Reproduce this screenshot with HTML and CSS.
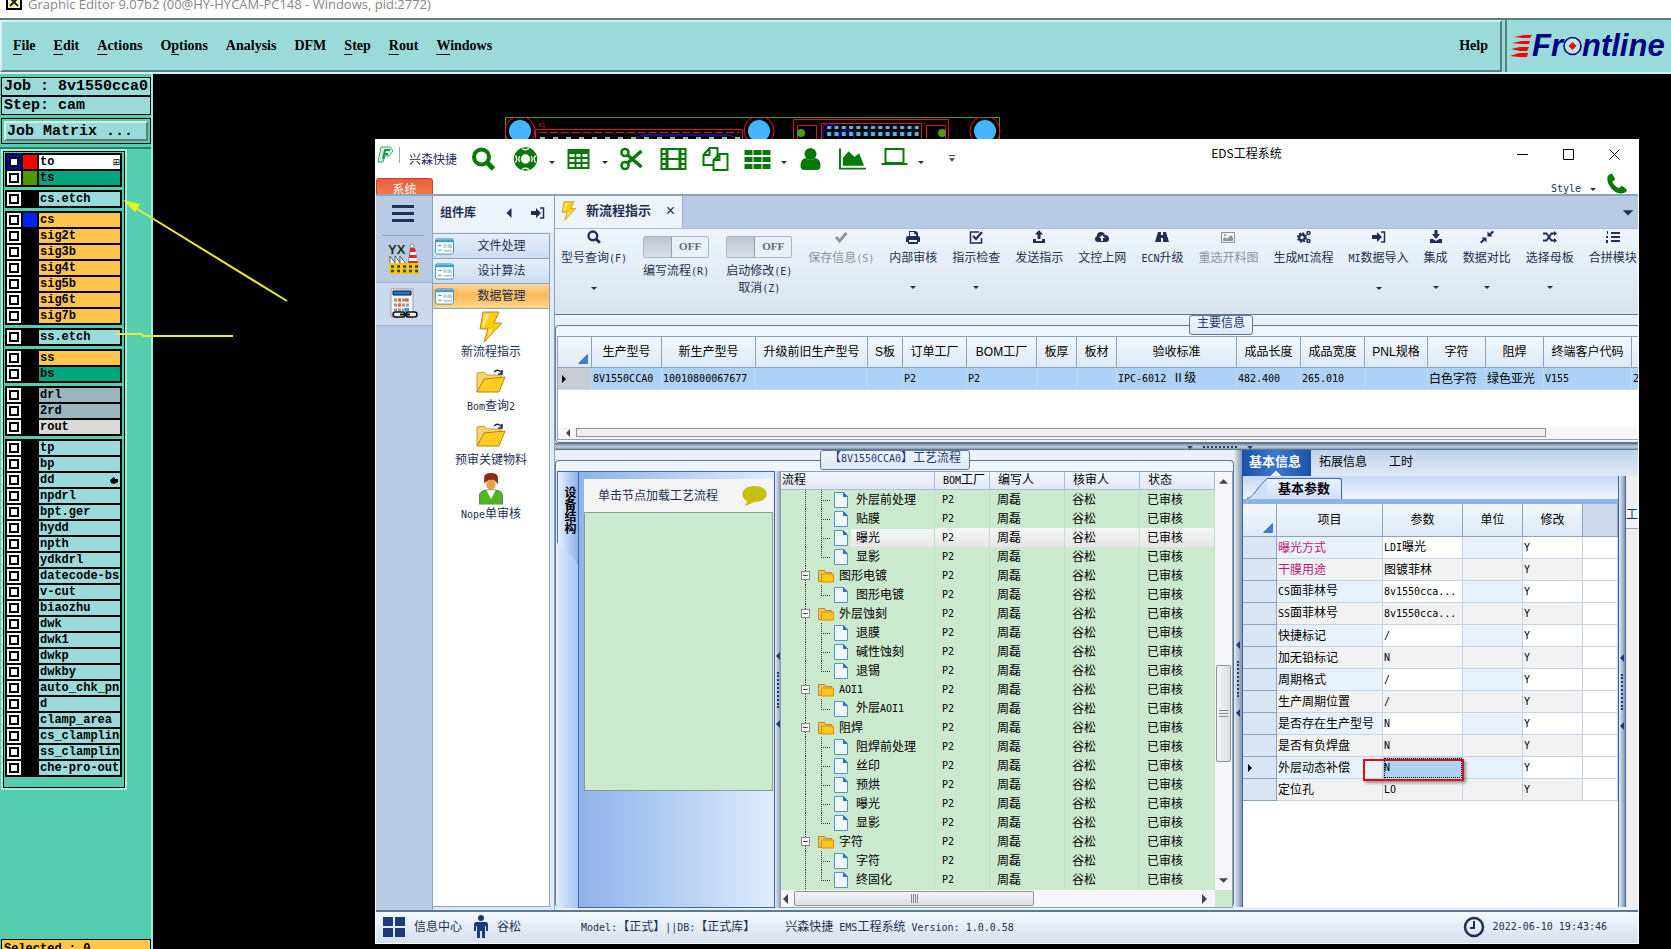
FILE: index.html
```html
<!DOCTYPE html>
<html lang="zh-CN">

<head>
  <meta charset="utf-8">
  <meta name="viewport" content="width=device-width">
  <title>EDS工程系统</title>
  <link rel="stylesheet" href="styles.css">
</head>
<body>
  <!-- icon sprite -->
  <svg class="sprite" width="0" height="0">
    <symbol id="search" viewBox="0 0 24 24"><circle cx="10" cy="10" r="7.5" fill="none" stroke="currentColor" stroke-width="4"/><path d="M15 15l7 7" stroke="currentColor" stroke-width="5"/></symbol>
    <symbol id="ring" viewBox="0 0 24 24"><circle cx="12" cy="12" r="8.2" fill="none" stroke="currentColor" stroke-width="7"/><g fill="none" stroke="#fff" stroke-width="1.3"><path d="M8.5 1.5q3.5 2.5 7 0M8.5 22.500q3.500-2.500 7 0M2 8.500q2.500 3.500 0 7M22 8.500q-2.500 3.500 0 7M6 9q-1.600 3 0 6M18 9q1.600 3 0 6"/></g></symbol>
    <symbol id="grid" viewBox="0 0 24 24"><path fill="currentColor" fill-rule="evenodd" d="M1 2h22v20H1zM3 7v3h5V7zm7 0v3h4V7zm6 0v3h5V7zM3 12v3h5v-3zm7 0v3h4v-3zm6 0v3h5v-3zM3 17v3h5v-3zm7 0v3h4v-3zm6 0v3h5v-3z"/></symbol>
    <symbol id="cut" viewBox="0 0 24 24"><g fill="none" stroke="currentColor" stroke-width="2.600"><circle cx="5.500" cy="5.500" r="3.500"/><circle cx="5.500" cy="18.500" r="3.500"/><path d="M8 8l14 12M8 16L22 4" stroke-width="3.600"/></g></symbol>
    <symbol id="film" viewBox="0 0 26 24"><path fill="currentColor" fill-rule="evenodd" d="M0 1h26v22H0zM2 3v3h3V3zm0 5v3h3V8zm0 5v3h3v-3zm0 5v3h3v-3zM8 3v8h10V3zm0 10v8h10v-8zM21 3v3h3V3zm0 5v3h3V8zm0 5v3h3v-3zm0 5v3h3v-3z"/></symbol>
    <symbol id="files" viewBox="0 0 26 24"><g fill="#fff" stroke="currentColor" stroke-width="2"><path d="M1 8l6-7h8v17H1zM1 8h6V1"/><path d="M11 13l6-6h8v16H11zM11 13h6V7"/></g></symbol>
    <symbol id="th" viewBox="0 0 26 24"><path fill="currentColor" d="M0 3h8v5H0zm9 0h8v5H9zm9 0h8v5h-8zM0 10h8v5H0zm9 0h8v5H9zm9 0h8v5h-8zM0 17h8v5H0zm9 0h8v5H9zm9 0h8v5h-8z"/></symbol>
    <symbol id="user" viewBox="0 0 24 24"><circle cx="12" cy="7" r="6" fill="currentColor"/><path fill="currentColor" d="M7 11q5 4 10 0 5 1 5 8 0 4-4 4H6q-4 0-4-4 0-7 5-8z"/></symbol>
    <symbol id="chart" viewBox="0 0 28 24"><path fill="currentColor" d="M0 1h2v20h26v2H0zM4 19v-8l6-7 6 6 5-4 5 13z"/></symbol>
    <symbol id="laptop" viewBox="0 0 26 24"><path fill="currentColor" fill-rule="evenodd" d="M3 1h20v15h3v2H0v-2h3zM5 3v12h16V3z"/></symbol>
    <symbol id="phone" viewBox="0 0 22 22"><path fill="currentColor" d="M1 4q2-4 5-3l3 5q0 2-3 3 2 5 7 7 2-3 4-2l4 3q1 3-3 4-6 2-12-4T1 4z"/></symbol>
    <symbol id="down" viewBox="0 0 8 8"><path fill="currentColor" d="M1 3h6L4 6z"/></symbol>
    <symbol id="more" viewBox="0 0 8 8"><path fill="#555" d="M1 0h6v1H1zM1 3h6L4 7z"/></symbol>
    <symbol id="check" viewBox="0 0 14 14"><path d="M2 7l3.500 4L12.500 3" fill="none" stroke="currentColor" stroke-width="3"/></symbol>
    <symbol id="print" viewBox="0 0 14 14"><path fill="currentColor" fill-rule="evenodd" d="M3 1h7l2 2v3q2 0 2 2v4h-2v2H2v-2H0V8q0-2 2-2h1zM4 2v4h6V4H8V2zM3 10v2h8v-2z"/></symbol>
    <symbol id="checkbox" viewBox="0 0 14 14"><path d="M12.500 8v5H1.500V2H10" fill="none" stroke="currentColor" stroke-width="1.500"/><path d="M4 6l3 3 6-7" fill="none" stroke="currentColor" stroke-width="2.200"/></symbol>
    <symbol id="upload" viewBox="0 0 14 14"><path fill="currentColor" d="M7 0l4 4.500H8.500V9h-3V4.500H3zM1 9h3v2h6V9h3v4H1z"/></symbol>
    <symbol id="cloud" viewBox="0 0 14 14"><path fill="currentColor" fill-rule="evenodd" d="M3 12q-3 0-3-3 0-2 2-3 0-4 4-4 3 0 4 3 4 0 4 4 0 3-3 3zM7 5L4 8h2v3h2V8h2z"/></symbol>
    <symbol id="road" viewBox="0 0 14 14"><path fill="currentColor" fill-rule="evenodd" d="M3 2h3v3h2V2h3l3 10H8V8H6v4H0z"/></symbol>
    <symbol id="image" viewBox="0 0 14 14"><path fill="none" stroke="currentColor" d="M.5 2.500h13v10H.5z"/><path fill="currentColor" d="M2 11V9l2-2 2 2 4-4 2 3v3z"/><circle cx="4" cy="5" r="1" fill="currentColor"/></symbol>
    <symbol id="cogs" viewBox="0 0 14 14"><g fill="none" stroke="currentColor"><circle cx="5" cy="7.500" r="2.800" stroke-width="2.200"/><circle cx="5" cy="7.500" r="4.500" stroke-width="1.500" stroke-dasharray="2 1.500"/><circle cx="11.500" cy="3" r="1.500" stroke-width="1.500"/><circle cx="11.500" cy="11" r="1.500" stroke-width="1.500"/></g></symbol>
    <symbol id="signin" viewBox="0 0 14 14"><path fill="currentColor" d="M0 5h5V2l5 5-5 5V9H0z"/><path d="M9 2h3.500v10H9" fill="none" stroke="currentColor" stroke-width="1.500"/></symbol>
    <symbol id="download" viewBox="0 0 14 14"><path fill="currentColor" d="M5.500 0h3v4H11L7 9 3 4h2.500zM1 9h3l3 2 3-2h3v4H1z"/></symbol>
    <symbol id="compress" viewBox="0 0 14 14"><path fill="currentColor" d="M7.500 1.500v5h5L11 5l3-3-1.500-1.500-3 3zM6.500 12.500v-5h-5L3 9l-3 3 1.500 1.500 3-3z"/></symbol>
    <symbol id="random" viewBox="0 0 14 14"><path d="M0 3.500h3.500l5 7H12M0 10.500h3.500l5-7H12" fill="none" stroke="currentColor" stroke-width="1.800"/><path fill="currentColor" d="M11 1l3 2.500L11 6zM11 8l3 2.500-3 2.500z"/></symbol>
    <symbol id="list" viewBox="0 0 14 14"><path fill="currentColor" d="M5 2h9v2H5zm0 4h9v2H5zm0 4h9v2H5zM1 1h1v3H1zm-1 5h2v2H0zm0 4h2v3H0z"/></symbol>
    <symbol id="bolt" viewBox="0 0 24 32"><path fill="#fc0" stroke="#b98a2a" d="M4 1h16l-5 11h8L5 31l4-13H1z"/><path fill="#ffe98a" d="M6 3h5L5 16H3zM10 18h4l-5 8z"/></symbol>
    <symbol id="open" viewBox="0 0 30 24"><path fill="#f6d56a" stroke="#c89a2c" d="M1 23V4l7-1 3 3h14v4"/><path fill="#fc2" stroke="#b8860b" d="M1 23L8 10l21-2-6 15z"/><path d="M18 3q4-4 8 1m0-3v4h-4" fill="none" stroke="#1c2b4f" stroke-width="1.500"/></symbol>
    <symbol id="person" viewBox="0 0 22 28"><path fill="#4db81e" stroke="#5a8a4a" d="M1 27V20q0-4 6-5h8q6 1 6 5v7z"/><path fill="#fff" d="M7 15l4 8 4-8z"/><path fill="#e9a04b" d="M7 4h8v8q-4 6-8 0z"/><path fill="#8b2a12" d="M5 9V4q0-4 6-4t6 4v6l-3-4H9z"/></symbol>
    <symbol id="form" viewBox="0 0 20 17"><rect x=".5" y=".5" width="19" height="16" rx="2" fill="#fff" stroke="#3f8fb8"/><path fill="#3f9fd0" d="M1 1h18v3H1zM3 7h4v1H3zm0 5h4v1H3z"/><path fill="#b8cde0" d="M9 6h3v4H9zm4 0h5v4h-5zm-4 6h9v2H9z"/></symbol>
    <symbol id="doc" viewBox="0 0 14 16"><path fill="#eef6ff" stroke="#5590d5" d="M.5.5h9l4 4v11H.5z"/><path fill="#2d6fd0" d="M9 0v5h5z"/></symbol>
    <symbol id="folder" viewBox="0 0 16 13"><path fill="#f1c453" stroke="#b98a2a" d="M.5 12V1h6l1 2h6v9z"/><path fill="#ffc91c" stroke="#e08c10" d="M3.500 4.500h12v8h-12z"/></symbol>
    <symbol id="corner" viewBox="0 0 10 10"><path fill="#3f7bd8" stroke="#2c4f94" stroke-width=".6" d="M9.500.5v9h-9z"/></symbol>
    <symbol id="right" viewBox="0 0 8 8"><path fill="currentColor" d="M2 0l4 4-4 4z"/></symbol>
    <symbol id="left" viewBox="0 0 8 8"><path fill="currentColor" d="M6 0L2 4l4 4z"/></symbol>
  </svg>

  <header class="x-title">
    <svg width="16" height="16" viewBox="0 0 16 16"><path fill="#ffffb0" stroke="#000" stroke-width="2" d="M1 1h14v14H1z"/><path d="M4 4l8 8M12 4l-8 8" stroke="#222" stroke-width="2"/></svg>
    <span>Graphic Editor 9.07b2 (00@HY-HYCAM-PC148 - Windows, pid:2772)</span>
  </header>
  <div class="x-bar">
    <nav class="x-menu">
      <button><u>F</u>ile</button><button><u>E</u>dit</button><button><u>A</u>ctions</button><button>O<u>p</u>tions</button><button>Analysis</button><button>DFM</button><button><u>S</u>tep</button><button><u>R</u>out</button><button><u>W</u>indows</button>
      <button class="help">Help</button>
    </nav>
    <div class="brand">
      <svg width="22" height="24" viewBox="0 0 22 24"><path fill="#f00" d="M4 3l10-2h8l-2 3h-7zM2 9l10-2h8l-1 3h-8zM1 15l9-2h9l-2 4h-7zM0 22l9-3h9l-1 4H9z"/></svg><span>Fr</span><svg width="19" height="20" viewBox="0 0 19 20"><circle cx="9.500" cy="10" r="8.500" fill="#b9e6e6" stroke="#000080" stroke-width="1.500"/><path fill="#f00" d="M9.500 6l4 4-4 4-4-4z"/></svg><span>ntline</span>
    </div>
  </div>

  <div class="x-main">
    <aside class="x-side">
      <div class="job">
        <div class="line">Job : 8v1550cca0</div>
        <div class="line">Step: cam</div>
        <div class="matrix"><button>Job Matrix ...</button></div>
      </div>
      <div class="layers">
        <div class="group">
          <label class="layer act"><input type="checkbox"><i class="red"></i><span class="white">to<b>⊞</b></span></label>
          <label class="layer"><input type="checkbox"><i class="olive"></i><span class="green">ts</span></label>
        </div>
        <div class="group">
          <label class="layer"><input type="checkbox"><i></i><span>cs.etch</span></label>
        </div>
        <div class="group">
          <label class="layer"><input type="checkbox"><i class="blue"></i><span class="amber">cs</span></label>
          <label class="layer"><input type="checkbox"><i></i><span class="amber">sig2t</span></label>
          <label class="layer"><input type="checkbox"><i></i><span class="amber">sig3b</span></label>
          <label class="layer"><input type="checkbox"><i></i><span class="amber">sig4t</span></label>
          <label class="layer"><input type="checkbox"><i></i><span class="amber">sig5b</span></label>
          <label class="layer"><input type="checkbox"><i></i><span class="amber">sig6t</span></label>
          <label class="layer"><input type="checkbox"><i></i><span class="amber">sig7b</span></label>
        </div>
        <div class="group">
          <label class="layer"><input type="checkbox"><i></i><span>ss.etch</span></label>
        </div>
        <div class="group">
          <label class="layer"><input type="checkbox"><i></i><span class="amber">ss</span></label>
          <label class="layer"><input type="checkbox"><i></i><span class="green">bs</span></label>
        </div>
        <div class="group">
          <label class="layer"><input type="checkbox"><i></i><span class="slate">drl</span></label>
          <label class="layer"><input type="checkbox"><i></i><span class="slate">2rd</span></label>
          <label class="layer"><input type="checkbox"><i></i><span class="gray">rout</span></label>
        </div>
        <div class="group">
          <label class="layer"><input type="checkbox"><i></i><span>tp</span></label>
          <label class="layer"><input type="checkbox"><i></i><span>bp</span></label>
          <label class="layer"><input type="checkbox"><i></i><span>dd<svg width="10" height="8" viewBox="0 0 10 8"><path d="M0 4l4-3 1 2h3v3L4 8 1 7z"/></svg></span></label>
          <label class="layer"><input type="checkbox"><i></i><span>npdrl</span></label>
          <label class="layer"><input type="checkbox"><i></i><span>bpt.ger</span></label>
          <label class="layer"><input type="checkbox"><i></i><span>hydd</span></label>
          <label class="layer"><input type="checkbox"><i></i><span>npth</span></label>
          <label class="layer"><input type="checkbox"><i></i><span>ydkdrl</span></label>
          <label class="layer"><input type="checkbox"><i></i><span>datecode-bs</span></label>
          <label class="layer"><input type="checkbox"><i></i><span>v-cut</span></label>
          <label class="layer"><input type="checkbox"><i></i><span>biaozhu</span></label>
          <label class="layer"><input type="checkbox"><i></i><span>dwk</span></label>
          <label class="layer"><input type="checkbox"><i></i><span>dwk1</span></label>
          <label class="layer"><input type="checkbox"><i></i><span>dwkp</span></label>
          <label class="layer"><input type="checkbox"><i></i><span>dwkby</span></label>
          <label class="layer"><input type="checkbox"><i></i><span>auto_chk_pnl</span></label>
          <label class="layer"><input type="checkbox"><i></i><span>d</span></label>
          <label class="layer"><input type="checkbox"><i></i><span>clamp_area</span></label>
          <label class="layer"><input type="checkbox"><i></i><span>cs_clampline</span></label>
          <label class="layer"><input type="checkbox"><i></i><span>ss_clampline</span></label>
          <label class="layer"><input type="checkbox"><i></i><span>che-pro-out</span></label>
        </div>
      </div>
      <div class="selected">Selected : 0</div>
    </aside>

    <main class="canvas">
      <svg class="board" width="496" height="24" viewBox="0 0 496 24">
        <defs><pattern id="pads" width="7.300" height="7" patternUnits="userSpaceOnUse"><path fill="#55b8f5" d="M1 1h4v4H1z"/></pattern></defs>
        <path d="M.5 24V.5h494V24" fill="none" stroke="#4c9a1c"/>
        <g fill="none" stroke="#e01818"><circle cx="15" cy="14" r="15"/><circle cx="254" cy="14" r="15"/><circle cx="480" cy="14" r="15"/><path d="M30.500 24V12.500h207V24M288.500 24V2.500h155V24M292.500 24V8.500h19V24M421.500 24V8.500h19V24M316.500 24V6.500h100V24"/><path d="M34 15.500h200" stroke-dasharray="8 3"/></g>
        <g fill="#45b5ff"><circle cx="15" cy="14" r="11"/><circle cx="254" cy="14" r="11"/><circle cx="480" cy="14" r="11"/></g>
        <path d="M35 22h200" stroke="#7ec8a8" stroke-width="4" stroke-dasharray="5 8"/><path d="M130 24q4-6 8-6h84q6 0 8 5" fill="none" stroke="#22f"/>
        <path d="M318 24V9q2-3 8-2t5 7M333 24q0-12 8-11t8 9" fill="none" stroke="#40f"/>
        <g fill="#4c9a1c"><circle cx="296" cy="16" r="4"/><circle cx="437" cy="16" r="4"/></g>
        <path fill="url(#pads)" d="M320 9h94v15h-94z"/>
        <text x="33" y="10" font-size="6" fill="#e01818">X1</text>
      </svg>

      <section class="win">
        <header class="caption">
          <svg class="logo" width="17" height="17" viewBox="0 0 17 17"><path fill="#d5f3e3" stroke="#3aa876" d="M4 1h9l3 4-4 5H8l-2 6H1z"/><path d="M6 13L8 4h5M7 8h4" fill="none" stroke="#109a55" stroke-width="2"/></svg>
          <span class="firm">兴森快捷</span>
          <div class="quick">
            <svg><use href="#search"/></svg><svg><use href="#ring"/></svg><svg class="dn"><use href="#down"/></svg><svg><use href="#grid"/></svg><svg class="dn"><use href="#down"/></svg><svg><use href="#cut"/></svg><svg><use href="#film"/></svg><svg><use href="#files"/></svg><svg><use href="#th"/></svg><svg class="dn"><use href="#down"/></svg><svg><use href="#user"/></svg><svg><use href="#chart"/></svg><svg><use href="#laptop"/></svg><svg class="dn"><use href="#down"/></svg><svg class="dn mo"><use href="#more"/></svg>
          </div>
          <h1>EDS工程系统</h1>
          <div class="ctl">
            <button aria-label="min"><svg viewBox="0 0 11 11"><path d="M0 5.500h11"/></svg></button>
            <button aria-label="max"><svg viewBox="0 0 11 11"><path d="M.5.5h10v10H.5z"/></svg></button>
            <button aria-label="close"><svg viewBox="0 0 11 11"><path d="M.5.5l10 10M10.500.5l-10 10"/></svg></button>
          </div>
        </header>
        <div class="subcap">
          <button class="sys">系统</button>
          <button class="style"><span class="lat">Style</span><svg class="dn"><use href="#down"/></svg></button>
          <svg class="tel"><use href="#phone"/></svg>
        </div>

        <div class="body">
          <nav class="rail">
            <button class="burger"><i></i><i></i><i></i></button>
            <button class="mod"><svg width="32" height="32" viewBox="0 0 32 32"><text x="0" y="11" font-size="13" font-weight="bold" font-family="Liberation Sans" fill="#143a1c">YX</text><path fill="#c8321e" d="M22 5h5l3 16H20z"/><path fill="#eee" d="M22 9h6v3h-6zM21 15h8v3h-8z"/><circle cx="24" cy="3" r="2" fill="#fff" stroke="#888"/><path fill="#fff" stroke="#444" stroke-width=".8" d="M2 21v-8l5 7v-7l5 7v-7l6 8"/><path fill="#ecc81a" d="M1 20h30v11H1z"/><path d="M3 23.500h27M3 28h27" stroke="#4a3c00" stroke-width="2.500" stroke-dasharray="3 3"/></svg></button>
            <button class="mod on"><svg width="30" height="32" viewBox="0 0 30 32"><path fill="#f4f4f4" stroke="#999" d="M2 1h22v28H2z"/><path fill="#1c7fbe" stroke="#114" d="M4 3h18v4H4z"/><path d="M5 12h16M5 17h16M5 22h16" stroke="#9a9a9a" stroke-width="3" stroke-dasharray="3 1"/><path d="M9 12h3m4 0h3M9 17h3" stroke="#f2642a" stroke-width="3"/><path d="M16 22h4" stroke="#2ad" stroke-width="4"/><g fill="#eee" stroke="#111" stroke-width="1.500"><rect x="4" y="24" width="12" height="5" rx="2.500"/><rect x="17" y="24" width="11" height="5" rx="2.500"/></g><path d="M11 26.500h10" stroke="#111" stroke-width="2"/></svg></button>
          </nav>
          <aside class="lib">
            <header><b>组件库</b><svg class="s8"><use href="#left"/></svg><svg class="s14"><use href="#signin"/></svg></header>
            <div class="acc">
              <button><svg><use href="#form"/></svg><span>文件处理</span></button>
              <button><svg><use href="#form"/></svg><span>设计算法</span></button>
              <button class="on"><svg><use href="#form"/></svg><span>数据管理</span></button>
              <div class="tools">
                <button><svg><use href="#bolt"/></svg>新流程指示</button>
                <button><svg><use href="#open"/></svg><span><span class="lat">Bom</span>查询<span class="lat">2</span></span></button>
                <button><svg><use href="#open"/></svg>预审关键物料</button>
                <button><svg><use href="#person"/></svg><span><span class="lat">Nope</span>单审核</span></button>
              </div>
            </div>
          </aside>

          <div class="work">
            <div class="tabs">
              <button><svg><use href="#bolt"/></svg><b>新流程指示</b><span>×</span></button>
              <svg class="s14"><use href="#down"/></svg>
            </div>
            <div class="ribbon">
              <button><svg><use href="#search"/></svg><span>型号查询<span class="lat">(F)</span></span><svg class="dn"><use href="#down"/></svg></button>
              <div class="sw"><button role="switch" aria-checked="false"><i></i><b>OFF</b></button><span>编写流程<span class="lat">(R)</span></span></div>
              <div class="sw"><button role="switch" aria-checked="false"><i></i><b>OFF</b></button><span>启动修改<span class="lat">(E)</span></span><span>取消<span class="lat">(Z)</span></span></div>
              <button disabled><svg><use href="#check"/></svg><span>保存信息<span class="lat">(S)</span></span></button>
              <button><svg><use href="#print"/></svg><span>内部审核</span><svg class="dn"><use href="#down"/></svg></button>
              <button><svg><use href="#checkbox"/></svg><span>指示检查</span><svg class="dn"><use href="#down"/></svg></button>
              <button><svg><use href="#upload"/></svg><span>发送指示</span></button>
              <button><svg><use href="#cloud"/></svg><span>文控上网</span></button>
              <button><svg><use href="#road"/></svg><span><span class="lat">ECN</span>升级</span></button>
              <button disabled><svg><use href="#image"/></svg><span>重选开料图</span></button>
              <button><svg><use href="#cogs"/></svg><span>生成<span class="lat">MI</span>流程</span></button>
              <button><svg><use href="#signin"/></svg><span><span class="lat">MI</span>数据导入</span><svg class="dn"><use href="#down"/></svg></button>
              <button><svg><use href="#download"/></svg><span>集成</span><svg class="dn"><use href="#down"/></svg></button>
              <button><svg><use href="#compress"/></svg><span>数据对比</span><svg class="dn"><use href="#down"/></svg></button>
              <button><svg><use href="#random"/></svg><span>选择母板</span><svg class="dn"><use href="#down"/></svg></button>
              <button><svg><use href="#list"/></svg><span>合拼模块</span></button>
            </div>

            <div class="top">
              <fieldset>
                <legend>主要信息</legend>
                <div class="scroller">
                  <table class="info">
                    <colgroup><col class="w34"><col class="w70"><col class="w94"><col class="w112"><col class="w35"><col class="w64"><col class="w70"><col class="w40"><col class="w40"><col class="w120"><col class="w64"><col class="w64"><col class="w63"><col class="w58"><col class="w58"><col class="w88"><col class="w40"></colgroup>
                    <tr><th class="cn"><svg><use href="#corner"/></svg></th><th>生产型号</th><th>新生产型号</th><th>升级前旧生产型号</th><th>S板</th><th>订单工厂</th><th>BOM工厂</th><th>板厚</th><th>板材</th><th>验收标准</th><th>成品长度</th><th>成品宽度</th><th>PNL规格</th><th>字符</th><th>阻焊</th><th>终端客户代码</th><th></th></tr>
                    <tr><td class="cur"><svg class="s8"><use href="#right"/></svg></td><td class="lat">8V1550CCA0</td><td class="lat">10010800067677</td><td></td><td></td><td class="lat">P2</td><td class="lat">P2</td><td></td><td></td><td><span class="lat">IPC-6012 </span>Ⅱ级</td><td class="lat">482.400</td><td class="lat">265.010</td><td></td><td>白色字符</td><td>绿色亚光</td><td class="lat">V155</td><td class="lat">2</td></tr>
                  </table>
                  <div class="hbar"><svg class="s8"><use href="#left"/></svg><i></i></div>
                </div>
              </fieldset>
            </div>
            <div class="hsplit"><svg class="s8"><use href="#down"/></svg><i></i><svg class="s8"><use href="#down"/></svg></div>

            <div class="lower">
              <fieldset class="flow">
                <legend>【<span class="lat">8V1550CCA0</span>】工艺流程</legend>
                <div class="cols">
                  <div class="vstrip"><b>设备结构</b></div>
                  <div class="nodes">
                    <header><span>单击节点加载工艺流程</span><svg width="25" height="20" viewBox="0 0 25 20"><path fill="#c6bf0c" d="M12 0c17 0 17 16 0 16q-3 2-9 4 2-3 2-5C-4 10 1 0 12 0z"/></svg></header>
                    <div class="pane"></div>
                  </div>
                  <div class="vsplit"><svg class="s8"><use href="#left"/></svg><i></i><svg class="s8"><use href="#left"/></svg></div>
                  <div class="treebox">
                    <div class="treerow">
                      <table class="tree">
                        <colgroup><col><col class="w55"><col class="w75"><col class="w75"><col class="w75"></colgroup>
                        <tr><th>流程</th><th><span class="lat">BOM</span>工厂</th><th>编写人</th><th>核审人</th><th>状态</th></tr>
                        <tr><td class="k"><i></i><svg><use href="#doc"/></svg><span>外层前处理</span></td><td class="lat">P2</td><td>周磊</td><td>谷松</td><td>已审核</td></tr>
                        <tr><td class="k"><i></i><svg><use href="#doc"/></svg><span>贴膜</span></td><td class="lat">P2</td><td>周磊</td><td>谷松</td><td>已审核</td></tr>
                        <tr class="hot"><td class="k"><i></i><svg><use href="#doc"/></svg><span>曝光</span></td><td class="lat">P2</td><td>周磊</td><td>谷松</td><td>已审核</td></tr>
                        <tr><td class="k end"><i></i><svg><use href="#doc"/></svg><span>显影</span></td><td class="lat">P2</td><td>周磊</td><td>谷松</td><td>已审核</td></tr>
                        <tr><td class="f"><button>−</button><svg><use href="#folder"/></svg><span>图形电镀</span></td><td class="lat">P2</td><td>周磊</td><td>谷松</td><td>已审核</td></tr>
                        <tr><td class="k end"><i></i><svg><use href="#doc"/></svg><span>图形电镀</span></td><td class="lat">P2</td><td>周磊</td><td>谷松</td><td>已审核</td></tr>
                        <tr><td class="f"><button>−</button><svg><use href="#folder"/></svg><span>外层蚀刻</span></td><td class="lat">P2</td><td>周磊</td><td>谷松</td><td>已审核</td></tr>
                        <tr><td class="k"><i></i><svg><use href="#doc"/></svg><span>退膜</span></td><td class="lat">P2</td><td>周磊</td><td>谷松</td><td>已审核</td></tr>
                        <tr><td class="k"><i></i><svg><use href="#doc"/></svg><span>碱性蚀刻</span></td><td class="lat">P2</td><td>周磊</td><td>谷松</td><td>已审核</td></tr>
                        <tr><td class="k end"><i></i><svg><use href="#doc"/></svg><span>退锡</span></td><td class="lat">P2</td><td>周磊</td><td>谷松</td><td>已审核</td></tr>
                        <tr><td class="f"><button>−</button><svg><use href="#folder"/></svg><span class="lat">AOI1</span></td><td class="lat">P2</td><td>周磊</td><td>谷松</td><td>已审核</td></tr>
                        <tr><td class="k end"><i></i><svg><use href="#doc"/></svg><span>外层<span class="lat">AOI1</span></span></td><td class="lat">P2</td><td>周磊</td><td>谷松</td><td>已审核</td></tr>
                        <tr><td class="f"><button>−</button><svg><use href="#folder"/></svg><span>阻焊</span></td><td class="lat">P2</td><td>周磊</td><td>谷松</td><td>已审核</td></tr>
                        <tr><td class="k"><i></i><svg><use href="#doc"/></svg><span>阻焊前处理</span></td><td class="lat">P2</td><td>周磊</td><td>谷松</td><td>已审核</td></tr>
                        <tr><td class="k"><i></i><svg><use href="#doc"/></svg><span>丝印</span></td><td class="lat">P2</td><td>周磊</td><td>谷松</td><td>已审核</td></tr>
                        <tr><td class="k"><i></i><svg><use href="#doc"/></svg><span>预烘</span></td><td class="lat">P2</td><td>周磊</td><td>谷松</td><td>已审核</td></tr>
                        <tr><td class="k"><i></i><svg><use href="#doc"/></svg><span>曝光</span></td><td class="lat">P2</td><td>周磊</td><td>谷松</td><td>已审核</td></tr>
                        <tr><td class="k end"><i></i><svg><use href="#doc"/></svg><span>显影</span></td><td class="lat">P2</td><td>周磊</td><td>谷松</td><td>已审核</td></tr>
                        <tr><td class="f"><button>−</button><svg><use href="#folder"/></svg><span>字符</span></td><td class="lat">P2</td><td>周磊</td><td>谷松</td><td>已审核</td></tr>
                        <tr><td class="k"><i></i><svg><use href="#doc"/></svg><span>字符</span></td><td class="lat">P2</td><td>周磊</td><td>谷松</td><td>已审核</td></tr>
                        <tr><td class="k end"><i></i><svg><use href="#doc"/></svg><span>终固化</span></td><td class="lat">P2</td><td>周磊</td><td>谷松</td><td>已审核</td></tr>
                      </table>
                      <div class="vbar"><svg viewBox="0 0 10 6"><path d="M0 6l5-5 5 5z"/></svg><i></i><svg viewBox="0 0 10 6"><path d="M0 0l5 5 5-5z"/></svg></div>
                    </div>
                    <div class="hbar2"><svg viewBox="0 0 6 10"><path d="M6 0L1 5l5 5z"/></svg><i></i><svg viewBox="0 0 6 10"><path d="M0 0l5 5-5 5z"/></svg></div>
                  </div>
                </div>
              </fieldset>
              <div class="vsplit wide"><svg class="s8"><use href="#left"/></svg><i></i><svg class="s8"><use href="#left"/></svg></div>
              <section class="props">
                <nav><button class="on">基本信息</button><button>拓展信息</button><button>工时</button></nav>
                <div class="cols">
                  <div class="param">
                    <div class="slant"><svg width="20" height="21" viewBox="0 0 20 21"><path fill="#cfe0fa" d="M0 21Q5 20 9 13T20 0v21z"/><path d="M0 20.500Q4 20 9 13T20 .5" fill="none" stroke="#3d66a8"/></svg><button>基本参数</button></div>
                    <table>
                      <colgroup><col class="w34"><col class="w106"><col class="w80"><col class="w60"><col class="w60"><col></colgroup>
                      <tr><th class="cn"><svg><use href="#corner"/></svg></th><th>项目</th><th>参数</th><th>单位</th><th>修改</th><th class="rest"></th></tr>
                      <tr><td></td><td class="pink">曝光方式</td><td><span class="lat">LDI</span>曝光</td><td></td><td class="lat">Y</td><td></td></tr>
                      <tr><td></td><td class="pink">干膜用途</td><td>图镀菲林</td><td></td><td class="lat">Y</td><td></td></tr>
                      <tr><td></td><td><span class="lat">CS</span>面菲林号</td><td class="lat">8v1550cca...</td><td></td><td class="lat">Y</td><td></td></tr>
                      <tr><td></td><td><span class="lat">SS</span>面菲林号</td><td class="lat">8v1550cca...</td><td></td><td class="lat">Y</td><td></td></tr>
                      <tr><td></td><td>快捷标记</td><td class="lat">/</td><td></td><td class="lat">Y</td><td></td></tr>
                      <tr><td></td><td>加无铅标记</td><td class="lat">N</td><td></td><td class="lat">Y</td><td></td></tr>
                      <tr><td></td><td>周期格式</td><td class="lat">/</td><td></td><td class="lat">Y</td><td></td></tr>
                      <tr><td></td><td>生产周期位置</td><td class="lat">/</td><td></td><td class="lat">Y</td><td></td></tr>
                      <tr><td></td><td>是否存在生产型号</td><td class="lat">N</td><td></td><td class="lat">Y</td><td></td></tr>
                      <tr><td></td><td>是否有负焊盘</td><td class="lat">N</td><td></td><td class="lat">Y</td><td></td></tr>
                      <tr><td><svg class="s8"><use href="#right"/></svg></td><td>外层动态补偿</td><td class="lat sel">N<i class="mark"></i></td><td></td><td class="lat">Y</td><td></td></tr>
                      <tr><td></td><td>定位孔</td><td class="lat">LO</td><td></td><td class="lat">Y</td><td></td></tr>
                    </table>
                  </div>
                  <div class="vsplit"><svg class="s8"><use href="#left"/></svg><i></i><svg class="s8"><use href="#left"/></svg></div>
                  <div class="edge"><div class="edgehead">工</div></div>
                </div>
              </section>
            </div>
          </div>
        </div>

        <footer class="status">
          <svg width="22" height="20" viewBox="0 0 22 20"><path fill="#1f3a78" d="M0 0h10v9H0zm12 0h10v9H12zM0 11h10v9H0zm12 0h10v9H12z"/></svg>
          <span>信息中心</span>
          <svg width="14" height="24" viewBox="0 0 14 24"><circle cx="7" cy="3" r="3" fill="#1f3a78"/><path fill="#1f3a78" d="M2 7h10q2 0 2 3v6h-2v-5h-1v12H8v-7H6v7H3V11H2v5H0v-6q0-3 2-3z"/></svg>
          <span>谷松</span>
          <span class="model"><span class="lat">Model:</span>【正式】<span class="lat">||DB:</span>【正式库】</span>
          <span class="ver">兴森快捷<span class="lat"> EMS</span>工程系统<span class="lat"> Version: 1.0.0.58</span></span>
          <svg class="clock" width="22" height="22" viewBox="0 0 22 22"><circle cx="11" cy="11" r="9" fill="none" stroke="#1f2f50" stroke-width="2.500"/><path d="M11 5v7H7" fill="none" stroke="#1f2f50" stroke-width="2"/></svg>
          <time class="lat">2022-06-10 19:43:46</time>
        </footer>
      </section>
    </main>
  </div>

  <!-- hand drawn arrows -->
  <svg class="notes" width="300" height="350" viewBox="0 0 300 350"><g stroke="#e6ea30" stroke-width="2"><path d="M287 301L134 207"/><path d="M116 334h26l1 2h90" fill="none"/></g><path fill="#e8f81c" d="M123 200l17 4-5 8z"/></svg>
</body>
</html>
```
FILE: styles.css
```css
* { box-sizing: border-box; }
html, body { height: 100%; margin: 0; overflow: hidden; }
body { display: flex; flex-direction: column; position: relative; background: #000; font: 12px/16px "Liberation Sans", "Noto Sans CJK SC", sans-serif; color: #000; }
button { font: inherit; color: inherit; background: none; border: 0; padding: 0; white-space: nowrap; }
svg { display: block; flex: none; }
.sprite { position: absolute; }
.notes { position: absolute; left: 0; top: 0; pointer-events: none; }
.lat { font-family: "DejaVu Sans Mono", monospace; font-size: 10px; }
.s8 { width: 8px; height: 8px; }
.s14 { width: 14px; height: 14px; }
.dn { width: 8px; height: 8px; }

/* graphic editor frame */
.x-title { flex: none; height: 18px; overflow: hidden; display: flex; align-items: flex-end; gap: 6px; padding: 0 6px 8px; background: #fff; color: #888; font: 13px/18px "Open Sans", sans-serif; white-space: nowrap; }
.x-title span { margin-bottom: -3px; }
.x-bar { flex: none; display: flex; height: 56px; background: #9bdadb; border-top: 2px solid #5a7f80; border-bottom: 2px solid #d4f0ef; }
.x-menu { flex: 1; display: flex; align-items: center; gap: 18px; padding: 0 12px 0 11px; border: 2px solid #d4f0ef; border-bottom-color: #5a7f80; border-right-color: #5a7f80; font: bold 14px/18px "Liberation Serif", serif; }
.x-menu u { text-underline-offset: 4px; }
.x-menu .help { margin-left: auto; }
.brand { display: flex; align-items: center; width: 166px; padding: 0 0 0 3px; border-left: 2px solid #5a7f80; margin-left: 3px; font: italic bold 31px/34px "Liberation Sans", sans-serif; color: #000080; overflow: hidden; }
.x-main { flex: 1; min-height: 0; display: flex; }
.x-side { flex: none; width: 153px; display: flex; flex-direction: column; background: #54ceae; border-right: 2px solid #a8ecd8; font: bold 12px/14px "Liberation Mono", monospace; }
.job { padding: 3px 0 3px 1px; font-size: 15px; border-bottom: 2px solid #2f7f6a; }
.job .line { height: 19px; padding: 0 2px; line-height: 18px; background: #9bdadb; border: 1px solid #000; white-space: nowrap; }
.job .matrix { margin-top: 3px; padding: 2px; border: 1px solid #000; }
.job button { width: 100%; height: 20px; padding: 0 1px; line-height: 17px; text-align: left; background: #9bdadb; border: 2px solid #d4f0ef; border-right-color: #5a7f80; border-bottom-color: #5a7f80; }
.layers { width: 122px; margin: 2px 0 0 3px; padding: 1px 2px 10px 1px; border: 1px solid #000; outline: 2px solid #a8ecd8; display: flex; flex-direction: column; gap: 3px; }
.group { width: 117px; padding: 2px 2px 0; background: #000; }
.layer { display: flex; gap: 2px; height: 14px; margin-bottom: 2px; }
.layer input { appearance: none; flex: none; width: 14px; height: 14px; margin: 0; background: #fff; border: 2px solid #fff; box-shadow: inset 0 0 0 2px #000; }
.act input { border-color: #0000c8; }
.layer i { flex: none; width: 14px; }
.layer span { flex: 1; min-width: 0; display: flex; align-items: center; justify-content: space-between; padding-left: 1px; overflow: hidden; white-space: nowrap; background: #9bdadb; }
.layer b { font: 9px/10px "DejaVu Sans", sans-serif; }
.layer .red { background: #f00; } .layer .olive { background: #4c9a00; } .layer .blue { background: #0020ff; }
.layer .white { background: #fff; } .layer .green { background: #00a67e; } .layer .amber { background: #ffc64b; }
.layer .slate { background: #9bb5bf; } .layer .gray { background: #dadada; }
.selected { height: 10px; margin: auto 0 0 1px; padding: 3px 2px 0; overflow: hidden; background: #ffc64b; border: 1px solid #000; border-bottom: 0; line-height: 13px; }
.canvas { flex: 1; position: relative; min-width: 0; }
.board { position: absolute; left: 352px; top: 43px; }

/* EDS window */
.win { position: absolute; left: 222px; right: 32px; top: 65px; bottom: 5px; display: flex; flex-direction: column; overflow: hidden; background: #fff; border: 1px solid #fff; border-top: 0; color: #1f2f50; }
.caption { flex: none; height: 34px; display: flex; align-items: flex-start; padding: 7px 18px 0 1px; }
.firm { margin: 6px 13px 0 5px; padding-left: 10px; position: relative; }
.firm::before { content: ""; position: absolute; left: 0; top: -5px; height: 16px; border-left: 1px solid #9ab; }
.quick { display: flex; align-items: center; gap: 15px; padding-top: 1px; color: #087808; }
.quick svg { width: 27px; height: 24px; }
.quick .dn { width: 8px; height: 8px; margin: 6px -6px 0; color: #1f2f50; }
.quick .mo { margin: 0 14px; }
.caption h1 { flex: 1; margin: 0; padding-left: 6px; font: 12px/13px "Noto Sans CJK SC", sans-serif; text-align: center; color: #000; }
.ctl { display: flex; gap: 35px; padding-top: 3px; }
.ctl button { width: 11px; height: 11px; }
.ctl svg { width: 11px; height: 11px; fill: none; stroke: #000; }
.subcap { flex: none; height: 21px; display: flex; align-items: flex-end; overflow: hidden; padding-right: 10px; }
.sys { width: 57px; height: 16px; overflow: hidden; line-height: 22px; color: #fff; background: linear-gradient(#e95f3c, #f0774f); border: 1px solid #c8432a; border-bottom: 0; border-radius: 3px 3px 0 0; }
.style { margin-left: auto; height: 10px; display: flex; gap: 8px; align-items: center; }
.tel { width: 22px; height: 21px; margin-left: 9px; color: #087808; }
.body { flex: 1; min-height: 0; display: flex; border-top: 2px solid #8ba3bf; background: #b9cbe4; }
.rail { flex: none; width: 57px; display: flex; flex-direction: column; border-right: 1px solid #8ba3bf; }
.burger { display: flex; flex-direction: column; gap: 4px; width: 42px; height: 40px; margin-left: 6px; padding: 9px 10px 0; border-bottom: 1px solid #8ba3bf; }
.burger i { height: 3px; background: #1f3355; }
.mod { width: 56px; height: 46px; display: flex; align-items: center; justify-content: center; }
.mod.on { height: 44px; background: #ccd9ec; border: solid #9bb0cc; border-width: 1px 0; }
.lib { flex: none; width: 121px; display: flex; flex-direction: column; background: #dfeaf8; }
.lib header { display: flex; align-items: center; gap: 17px; height: 36px; padding: 0 9px 2px 7px; background: #edf4fd; }
.lib header .s8 { width: 10px; height: 10px; margin-left: auto; }
.lib b { font-size: 12px; }
.acc { flex: 1; margin: 1px 4px 3px 0; background: #fff; border: 1px solid #8ba3bf; border-left: 0; }
.acc > button { display: flex; align-items: center; width: 100%; height: 25px; padding: 0 4px 0 2px; background: linear-gradient(#e6effb, #cbdcf2); border-bottom: 1px solid #8ba3bf; }
.acc > button svg { width: 19px; height: 17px; }
.acc > button span { flex: 1; padding-left: 4px; }
.acc > .on { background: linear-gradient(#fcd9a0, #fbb75a 45%, #fdd88c); }
.tools { display: flex; flex-direction: column; padding-top: 2px; }
.tools button { display: flex; flex-direction: column; align-items: center; height: 54px; }
.tools svg { width: 30px; height: 32px; margin-bottom: 1px; }

.work { flex: 1; min-width: 0; display: flex; flex-direction: column; border-left: 1px solid #8ba3bf; background: #eaf1fb; }
.tabs { flex: none; height: 32px; display: flex; align-items: center; justify-content: space-between; padding-right: 3px; background: #b9cbe4; }
.tabs button { display: flex; align-items: center; align-self: stretch; width: 128px; padding: 0 7px 2px 6px; background: #edf4fd; border-right: 1px solid #9bb0cc; }
.tabs button svg { width: 16px; height: 20px; margin-right: 9px; }
.tabs b { font-size: 13px; }
.tabs span { margin-left: auto; font-size: 16px; }
.ribbon { flex: none; height: 86px; display: flex; gap: 15px; padding: 1px 0 0 6px; background: linear-gradient(#eef5fe, #d8e4f1); border-top: 1px solid #a9bcd4; overflow: hidden; }
.ribbon > button { flex: none; display: flex; flex-direction: column; align-items: center; }
.ribbon > button > svg:first-child { width: 14px; height: 14px; margin: 0 0 6px; }
.ribbon > button .dn { margin-top: 17px; }
.ribbon > button:disabled { color: #8d949c; }
.sw { flex: none; display: flex; flex-direction: column; align-items: center; padding: 6px 1px 0; }
.sw button { display: flex; width: 66px; height: 22px; margin-bottom: 5px; border: 1px solid #aab6c6; border-radius: 2px; background: #e9f0f9; }
.sw i { width: 28px; height: 20px; background: linear-gradient(#bcc6d2, #d8dfe8); border-right: 1px solid #8fa0b5; }
.sw b { flex: 1; font: bold 11px/19px "Liberation Serif", serif; color: #667; }
.sw span { line-height: 16px; white-space: nowrap; }

fieldset { margin: 0; min-width: 0; border: 1px solid #5f7891; border-radius: 4px; background: #eff5fd; }
legend { height: 20px; padding: 0 7px; line-height: 15px; color: #1f3a78; background: linear-gradient(#eef4fc, #dde9f7); border: 1px solid #5f7891; border-radius: 3px; }
table { border-collapse: separate; border-spacing: 0; table-layout: fixed; }
th { font-weight: normal; color: #000; }
td { color: #000; white-space: nowrap; overflow: hidden; }
.w34 { width: 34px; } .w35 { width: 35px; } .w40 { width: 40px; } .w55 { width: 55px; } .w58 { width: 58px; } .w60 { width: 60px; } .w63 { width: 63px; } .w64 { width: 64px; } .w70 { width: 70px; } .w75 { width: 75px; } .w80 { width: 80px; } .w88 { width: 88px; } .w94 { width: 94px; } .w106 { width: 106px; } .w112 { width: 112px; } .w120 { width: 120px; }
.top { flex: none; height: 130px; border: solid #5f7891; border-width: 1px 0; overflow: hidden; }
.top fieldset { height: 128px; padding: 0 0 2px 1px; border-right: 0; border-radius: 4px 0 0 4px; }
.top legend { width: 64px; margin-left: 632px; }
.scroller { margin-top: 1px; height: 104px; overflow: hidden; display: flex; flex-direction: column; background: #fff; border: solid #8ba3bf; border-width: 1px 0 1px 1px; }
.info { flex: none; width: 1114px; }
.info th { height: 31px; padding: 0; background: linear-gradient(#f1f7fe, #dfe9f7); border: solid #8ba3bf; border-width: 0 1px 1px 0; white-space: nowrap; }
.info td { height: 22px; padding: 0 0 0 1px; background: #add2f7; border-right: 1px solid #bcd9f6; border-bottom: 1px solid #c6ddf5; }
.info .cur { padding-left: 2px; background: #c8cdd4; }
.info .cur svg, .param td svg { color: #000; }
.cn { vertical-align: bottom; }
.cn svg { width: 10px; height: 10px; margin: 0 3px 3px auto; }
.hbar { margin-top: auto; display: flex; align-items: center; height: 12px; padding: 0 0 1px 6px; background: #f6f6f8; color: #444; }
.hbar i { width: 970px; height: 9px; margin-left: 4px; background: #eceef2; border: 1px solid #8e949c; }
.hsplit { flex: none; display: flex; align-items: center; justify-content: center; gap: 9px; height: 5px; padding-left: 247px; background: linear-gradient(#8496a8, #c4d0dd 60%, #8496a8); color: #1f3a78; }
.hsplit i { width: 34px; border-top: 2px dotted #1f3a78; }

.lower { flex: 1; min-height: 0; display: flex; padding-bottom: 3px; border-top: 1px solid #5f7891; }
.flow { flex: 1; padding: 0 0 0 1px; border-bottom: 0; }
.flow legend { margin: 0 auto; padding: 0 8px; }
.cols { flex: 1; min-height: 0; display: flex; }
.flow .cols { height: 100%; margin-top: 1px; }
.vstrip { flex: none; width: 21px; background: linear-gradient(90deg, #dbe9fd, #a9c6f3); }
.vstrip b { display: block; width: 21px; height: 92px; padding: 14px 1px 0; writing-mode: vertical-rl; line-height: 17px; color: #000; background: linear-gradient(90deg, #e8f1fe, #8fb3ea); border: 1px solid #3d66a8; border-right: 0; clip-path: polygon(0 0, 100% 0, 100% 100%, 0 78%); }
.nodes { flex: none; width: 197px; padding: 7px 1px 0 5px; background: linear-gradient(90deg, #8fb2ea, #dfecfd); border: 1px solid #3d66a8; }
.nodes header { height: 33px; display: flex; align-items: center; justify-content: space-between; padding: 0 6px 0 14px; background: #f4f4f5; }
.nodes .pane { height: 279px; background: #cbe9cd; border: 1px solid #7fa08e; }
.vsplit { flex: none; width: 6px; display: flex; flex-direction: column; align-items: center; justify-content: center; gap: 12px; background: linear-gradient(90deg, #e4ecf6, #8496a8); color: #1f3a78; overflow: hidden; }
.vsplit i { height: 36px; border-left: 2px dotted #1f3a78; }
.vsplit.wide { width: 8px; }
.treebox { flex: 1; min-width: 0; display: flex; flex-direction: column; background: #cbe9cd; border: solid #8ba3bf; border-width: 1px 1px 1px 0; }
.treerow { flex: 1; min-height: 0; display: flex; overflow: hidden; }
.tree { flex: 1; align-self: flex-start; width: 100%; }
.tree th { height: 18px; padding: 0 0 0 8px; text-align: left; line-height: 17px; background: linear-gradient(#f1f7fe, #dfe9f7); border: solid #a9bcd4; border-width: 0 1px 1px 0; }
.tree th:first-child { padding-left: 1px; }
.tree td { height: 19px; padding: 0 0 0 7px; line-height: 18px; border-right: 1px solid #c2dfc8; }
.tree td:first-child { display: flex; align-items: center; gap: 3px; padding: 0; background: repeating-linear-gradient(#333 0 1px, transparent 1px 2px) 24px 0 / 1px 100% no-repeat; }
.tree .k i { width: 10px; height: 19px; margin-left: 40px; background: repeating-linear-gradient(#333 0 1px, transparent 1px 2px) 0 0 / 1px 100% no-repeat, repeating-linear-gradient(90deg, #333 0 1px, transparent 1px 2px) 0 10px / 10px 1px no-repeat; }
.tree .end i { background-size: 1px 10px, 10px 1px; }
.tree .k svg { width: 14px; height: 16px; }
.tree .k > span { padding-left: 5px; }
.tree .f svg { width: 16px; height: 14px; margin-left: 5px; }
.tree .f > span { padding-left: 2px; }
.tree button { width: 9px; height: 9px; margin-left: 20px; line-height: 6px; font-size: 10px; color: #000; background: #fff; border: 1px solid #888; }
.hot td, .hot .k > span, .hot .k svg { background: linear-gradient(#f6f6f6, #e6e6e6); }
.hot .k > span { flex: 1; }
.vbar { flex: none; width: 17px; display: flex; flex-direction: column; align-items: center; padding: 6px 0; background: #f6f6f8; fill: #444; }
.vbar svg { width: 9px; height: 6px; }
.vbar i { width: 15px; height: 97px; margin: 181px 0 auto; background: linear-gradient(transparent 44px, #888 44px 45px, transparent 45px 47px, #888 47px 48px, transparent 48px 50px, #888 50px 51px, transparent 51px) center / 9px 100% no-repeat, linear-gradient(90deg, #f2f4f6, #dcdfe4); border: 1px solid #8e949c; border-radius: 2px; }
.hbar2 { flex: none; height: 17px; margin-right: 17px; display: flex; align-items: center; padding: 0 7px 0 1px; background: #f6f6f8; fill: #444; }
.hbar2 svg { width: 6px; height: 10px; }
.hbar2 i { width: 240px; height: 15px; margin: 0 auto 0 6px; background: repeating-linear-gradient(90deg, #888 0 1px, transparent 1px 2px) center / 7px 9px no-repeat, linear-gradient(#f2f4f6, #dcdfe4); border: 1px solid #8e949c; border-radius: 2px; }

.props { flex: none; width: 396px; display: flex; flex-direction: column; background: #fff; }
.props nav { flex: none; display: flex; height: 26px; background: linear-gradient(#bdd2ec, #dfe9f6); color: #000; }
.props nav button { padding: 0 14px 2px 8px; }
.props nav .on { width: 69px; padding: 0 3px 2px 0; font-size: 13px; font-weight: bold; color: #fff; background: linear-gradient(45deg, #fff 4px, transparent 4px) 34px 100% / 7px 7px no-repeat, linear-gradient(-45deg, #fff 4px, transparent 4px) 27px 100% / 7px 7px no-repeat, linear-gradient(90deg, #1c50a8, #3d78d0, #1c50a8); }
.param { flex: 1; min-width: 0; display: flex; flex-direction: column; background: #fff; border: solid #3d66a8; border-width: 0 1px; }
.slant { flex: none; height: 28px; display: flex; align-items: flex-end; padding: 2px 0 0 4px; background: linear-gradient(#c5d8f8, #eff5fe); border-bottom: 5px solid #8fb2ea; }
.slant button { height: 21px; padding: 0 11px; font-size: 13px; font-weight: bold; color: #000; background: linear-gradient(#e8f1fe, #cfe0fa); border: solid #3d66a8; border-width: 1px 1px 0 0; border-radius: 0 3px 0 0; }
.param table { width: 100%; }
.param th { height: 33px; padding: 0; background: linear-gradient(#f1f7fe, #dfe9f7); border: solid #8ba3bf; border-width: 0 1px 1px 0; }
.param .rest { background: #ccdaeb; }
.param td { height: 22px; padding: 0 0 0 1px; border: solid #c3d3ea; border-width: 0 1px 1px 0; }
.param tr:nth-child(odd) td { background: #f2f2f2; }
.param tr:nth-child(even) td { background: #fff; }
.param tr:nth-child(even) td:nth-child(2), .param tr:nth-child(even) td:nth-child(4) { background: #e9f2fc; }
.param tr td:first-child { padding-left: 3px; background: #d9e6f5 !important; border-color: #8ba3bf; }
.param tr td:last-child { background: #fff !important; }
.param .pink { color: #c0187c; }
.param tr:nth-child(even) td.sel { position: relative; overflow: visible; background: #add2f5; outline: 1px dotted #000; outline-offset: -2px; }
.mark { position: absolute; left: -20px; right: -2px; top: 2px; bottom: -3px; border: 2px solid #d01414; box-shadow: 2px 2px 3px rgba(0,0,0,.4); }
.edge { flex: none; width: 13px; overflow: hidden; background: #efefef; border-left: 1px solid #3d66a8; }
.edgehead { margin-top: 28px; height: 25px; padding: 3px 0; background: #edf4fd; border-bottom: 1px solid #8ba3bf; }
.status { flex: none; height: 33px; display: flex; align-items: center; padding: 0 31px 1px 7px; background: linear-gradient(#f3f8fe, #d3e0ef); border-top: 2px solid #5f7891; white-space: nowrap; }
.status > span { margin: 0 12px 0 9px; }
.status .model { margin-left: 48px; margin-right: 30px; }
.status .ver { margin-left: 0; white-space: pre; }
.status .clock { margin-left: auto; margin-right: 8px; }
```
